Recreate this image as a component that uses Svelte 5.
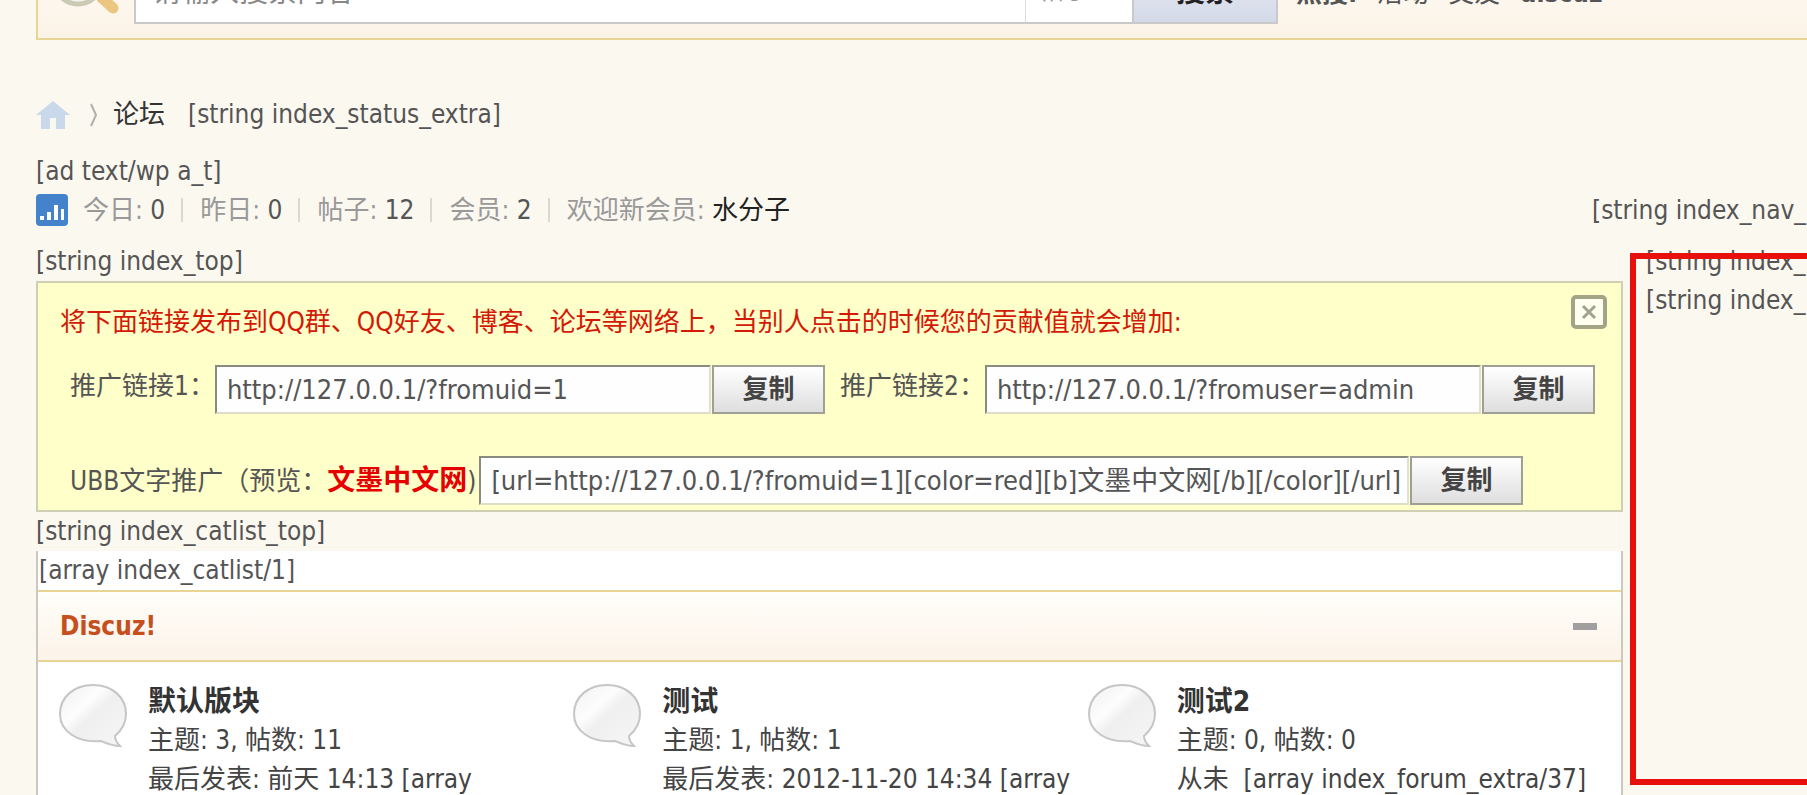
<script>
  const stats = [
    { label: "今日", value: "0" },
    { label: "昨日", value: "0" },
    { label: "帖子", value: "12" },
    { label: "会员", value: "2" },
  ];

  let links = $state([
    { id: "link-uid", label: "推广链接1：", value: "http://127.0.0.1/?fromuid=1" },
    { id: "link-user", label: "推广链接2：", value: "http://127.0.0.1/?fromuser=admin" },
  ]);

  const forums = [
    { name: "默认版块", threads: 3, posts: 11, last: "最后发表: 前天 14:13 [array" },
    { name: "测试", threads: 1, posts: 1, last: "最后发表: 2012-11-20 14:34 [array" },
    { name: "测试2", threads: 0, posts: 0, last: "从未  [array index_forum_extra/37]" },
  ];

  let ubb = $state("[url=http://127.0.0.1/?fromuid=1][color=red][b]文墨中文网[/b][/color][/url]");
  let showPromo = $state(true);
  let collapsed = $state(false);

  function copy(text) {
    navigator.clipboard?.writeText(text);
  }
</script>

<div class="page">
  <!-- Search -->
  <form class="search" onsubmit={(e) => e.preventDefault()}>
    <svg class="lens" width="70" height="66" viewBox="0 0 70 66" aria-hidden="true">
      <path d="M44 46 L55 56" stroke="#ebc681" stroke-width="11" stroke-linecap="round" />
      <path d="M38 41 L44 46" stroke="#d9b070" stroke-width="7" />
      <circle cx="20" cy="28" r="24" fill="#f3f5f2" stroke="#cccab4" stroke-width="5" />
    </svg>
    <div class="search-box">
      <input class="search-input" aria-label="搜索" placeholder="请输入搜索内容" />
      <button type="button" class="search-type">帖子</button>
      <button type="submit" class="search-go">搜索</button>
    </div>
    <div class="hot"><b>热搜:</b> <a href="#top">活动</a> <a href="#top">交友</a> <a href="#top"><b>discuz</b></a></div>
  </form>

  <!-- Breadcrumb -->
  <nav class="crumbs">
    <a href="#top" aria-label="首页">
      <svg width="34" height="28" viewBox="0 0 34 28">
        <path d="M17 0 L34 14 H29 V28 H20 V17 H14 V28 H5 V14 H0 Z" fill="#c9d8ea" />
      </svg>
    </a>
    <svg class="sep" width="8" height="24" viewBox="0 0 8 24" aria-hidden="true">
      <path d="M1 1 L6 12 L1 23" fill="none" stroke="#b0b0aa" stroke-width="2" />
    </svg>
    <a class="dark" href="#top">论坛</a>
    <span>[string index_status_extra]</span>
  </nav>

  <div class="ad">[ad text/wp a_t]</div>

  <!-- Stats -->
  <div class="chart">
    <svg width="32" height="32" viewBox="0 0 32 32" aria-hidden="true">
      <rect width="32" height="32" rx="4" fill="#4482cc" />
      <path d="M4 22h4v4H4z M11 18h4v8h-4z M18 11h4v15h-4z M25 15h3v11h-3z" fill="#fff" />
    </svg>
    <p class="stats">
      {#each stats as s}
        <span class="stat">{s.label}: <em>{s.value}</em></span>
      {/each}
      <span class="stat">欢迎新会员: <a href="#top">水分子</a></span>
    </p>
    <span class="nav-extra">[string index_nav_</span>
  </div>

  <div class="columns">
    <main>
      <div class="hook">[string index_top]</div>

      {#if showPromo}
        <section class="promo">
          <header>
            <p>将下面链接发布到QQ群、QQ好友、博客、论坛等网络上，当别人点击的时候您的贡献值就会增加:</p>
            <button class="close" aria-label="关闭" onclick={() => (showPromo = false)}>
              <svg width="36" height="34" viewBox="0 0 36 34">
                <rect x="2" y="2" width="32" height="30" rx="3" fill="#fffff0" stroke="#a3a387" stroke-width="4" />
                <path d="M12 11 L24 23 M24 11 L12 23" stroke="#a3a390" stroke-width="3" />
              </svg>
            </button>
          </header>
          <div class="row">
            {#each links as link}
              <div class="field">
                <label for={link.id}>{link.label}</label>
                <input id={link.id} bind:value={link.value} />
                <button class="copy" onclick={() => copy(link.value)}>复制</button>
              </div>
            {/each}
          </div>
          <div class="row ubb">
            <div class="field">
              <label for="ubb">UBB文字推广（预览：<b>文墨中文网</b>)</label>
              <input id="ubb" bind:value={ubb} />
              <button class="copy" onclick={() => copy(ubb)}>复制</button>
            </div>
          </div>
        </section>
      {/if}

      <div class="hook">[string index_catlist_top]</div>

      <section class="category">
        <div class="hook">[array index_catlist/1]</div>
        <header class="cat-head">
          <h2><a href="#top">Discuz!</a></h2>
          <button class="fold" aria-label="收起/展开" onclick={() => (collapsed = !collapsed)}></button>
        </header>
        {#if !collapsed}
          <div class="forums">
            {#each forums as f}
              <article>
                <svg width="70" height="64" viewBox="0 0 70 64" aria-hidden="true">
                  <defs>
                    <linearGradient id="bubble" x1="0" y1="0" x2="1" y2="1">
                      <stop offset="0" stop-color="#f0f0f0" />
                      <stop offset="0.35" stop-color="#fdfdfd" />
                      <stop offset="0.5" stop-color="#efefef" />
                      <stop offset="1" stop-color="#f6f6f6" />
                    </linearGradient>
                  </defs>
                  <path
                    d="M35 1 C54 1 68 13 68 30 C68 39 64 46 57 52 C57 56 59 59 62 62 C54 62 50 60 43 57 C20 59 2 48 2 30 C2 13 16 1 35 1 Z"
                    fill="url(#bubble)" stroke="#c6c6c6" stroke-width="2" />
                </svg>
                <div class="info">
                  <h3><a href="#top">{f.name}</a></h3>
                  <p>主题: {f.threads}, 帖数: {f.posts}</p>
                  <p>{f.last}</p>
                </div>
              </article>
            {/each}
          </div>
        {/if}
      </section>
    </main>

    <aside>
      <div class="hook">[string index_</div>
      <div class="hook">[string index_</div>
      <div class="frame"></div>
    </aside>
  </div>
</div>

<style>
  :global(body) {
    margin: 0;
    background: #fbf8f0;
  }
  .page {
    height: 100vh;
    overflow: hidden;
    padding-left: 36px;
    box-sizing: border-box;
    color: #555;
    font: 26px/39px "DejaVu Sans Condensed", "Noto Sans CJK SC", sans-serif;
    white-space: nowrap;
  }
  p, h2, h3 {
    margin: 0;
  }
  a {
    color: inherit;
    text-decoration: none;
  }
  input, button {
    font: inherit;
    color: inherit;
    box-sizing: border-box;
    border-radius: 0;
  }
  button {
    padding: 0;
    cursor: pointer;
  }

  .search {
    display: flex;
    margin-top: -50px;
    height: 90px;
    box-sizing: border-box;
    padding: 0 0 14px 20px;
    border: 2px solid #e8d593;
    border-right: 0;
    background: linear-gradient(#fdfcf6, #fcf3e7);
  }
  .lens {
    flex: none;
    margin-right: 6px;
  }
  .search-box {
    display: flex;
    width: 1144px;
    border: 2px solid #c9c9c9;
    box-sizing: border-box;
    background: #fff;
    font-size: 29px;
  }
  .search-input {
    flex: 1;
    min-width: 0;
    border: 0;
    padding: 8px 16px 0;
    background: none;
    outline: none;
  }
  .search-input::placeholder {
    color: #888;
    opacity: 1;
  }
  .search-type {
    width: 107px;
    padding: 4px 16px 0 12px;
    border: 0;
    border-left: 1px solid #ddd;
    background: none;
    color: #999;
    font-size: 26px;
    text-align: left;
  }
  .search-go {
    width: 144px;
    padding-top: 8px;
    border: 0;
    border-left: 2px solid #c9c9c9;
    background: linear-gradient(#eef0f4, #d3d9e8);
    color: #222;
    font-weight: bold;
  }
  .hot {
    padding: 22px 0 0 18px;
  }
  .hot a {
    margin-left: 12px;
  }

  .crumbs {
    display: flex;
    align-items: center;
    margin-top: 55px;
  }
  .crumbs a {
    display: flex;
  }
  .sep {
    margin: 0 15px 0 20px;
  }
  .crumbs .dark {
    color: #333;
    margin-right: 23px;
  }
  .ad {
    margin-top: 18px;
  }

  .chart {
    display: flex;
    align-items: center;
    height: 38px;
    margin-bottom: 13px;
  }
  .stats {
    display: flex;
    margin-left: 15px;
    color: #999;
  }
  .stat + .stat::before {
    content: "";
    display: inline-block;
    height: 24px;
    margin: 0 17px 0 16px;
    border-left: 2px solid #ddd8cc;
    vertical-align: -3px;
  }
  .stat em {
    font-style: normal;
    color: #555;
  }
  .stat a {
    color: #222;
  }
  .nav-extra {
    width: 215px;
    margin-left: auto;
    overflow: hidden;
  }

  .columns {
    display: flex;
  }
  main {
    flex: 1;
    min-width: 0;
  }

  .promo {
    height: 231px;
    box-sizing: border-box;
    padding: 12px 26px 0 22px;
    border: 2px solid #cfcfb4;
    background: #ffffc9;
  }
  .promo header {
    display: flex;
    justify-content: space-between;
    align-items: flex-start;
    height: 70px;
    margin-right: -12px;
  }
  .promo p {
    margin-top: 8px;
    color: #d31a08;
  }
  .close {
    display: flex;
    border: 0;
    background: none;
  }
  .row {
    display: flex;
    gap: 15px;
    padding-left: 10px;
  }
  .field {
    display: flex;
    flex: 1;
    height: 49px;
  }
  label {
    line-height: 42px;
  }
  label b {
    color: #e60000;
    font-size: 28px;
  }
  .field input {
    flex: 1;
    min-width: 0;
    padding: 0 0 0 10px;
    border: 2px solid;
    border-color: #8a8a80 #e0e0d8 #dedec8 #8a8a80;
    background: #fefefe;
    font-size: 27px;
  }
  .copy {
    width: 113px;
    margin-left: 1px;
    border: 2px solid #9f9f94;
    background: linear-gradient(#fff, #dedede);
    color: #444;
    font-weight: bold;
  }
  .ubb {
    margin: 42px 72px 0 0;
  }
  .ubb label {
    margin-right: 3px;
    line-height: 50px;
  }

  .category {
    min-height: 300px;
    border: solid #ccc8c0;
    border-width: 0 2px;
    background: #fff;
  }
  .category .hook {
    padding-left: 1px;
  }
  .cat-head {
    display: flex;
    align-items: center;
    justify-content: space-between;
    height: 72px;
    box-sizing: border-box;
    padding: 0 24px 0 22px;
    border: solid #e8d593;
    border-width: 2px 0;
    background: linear-gradient(#fffefa, #fcf3e8);
  }
  h2 {
    font-size: 26px;
    color: #c5501e;
  }
  .fold {
    width: 24px;
    height: 7px;
    border: 0;
    background: #a09e9e;
  }
  .forums {
    display: grid;
    grid-template-columns: repeat(3, 1fr);
    padding: 20px;
  }
  article {
    display: flex;
    gap: 20px;
    min-width: 0;
  }
  article svg {
    flex: none;
    margin-top: 2px;
  }
  h3 {
    font-size: 28px;
    color: #333;
  }
  .info p {
    white-space: pre;
    color: #444;
  }

  aside {
    position: relative;
    width: 177px;
    height: 543px;
    margin-left: 7px;
    padding-left: 16px;
    box-sizing: border-box;
    flex: none;
  }
  aside .hook {
    overflow: hidden;
  }
  .frame {
    position: absolute;
    inset: 11px 0 0 0;
    border: 6px solid #e8100c;
    border-right: 0;
    pointer-events: none;
  }
</style>
